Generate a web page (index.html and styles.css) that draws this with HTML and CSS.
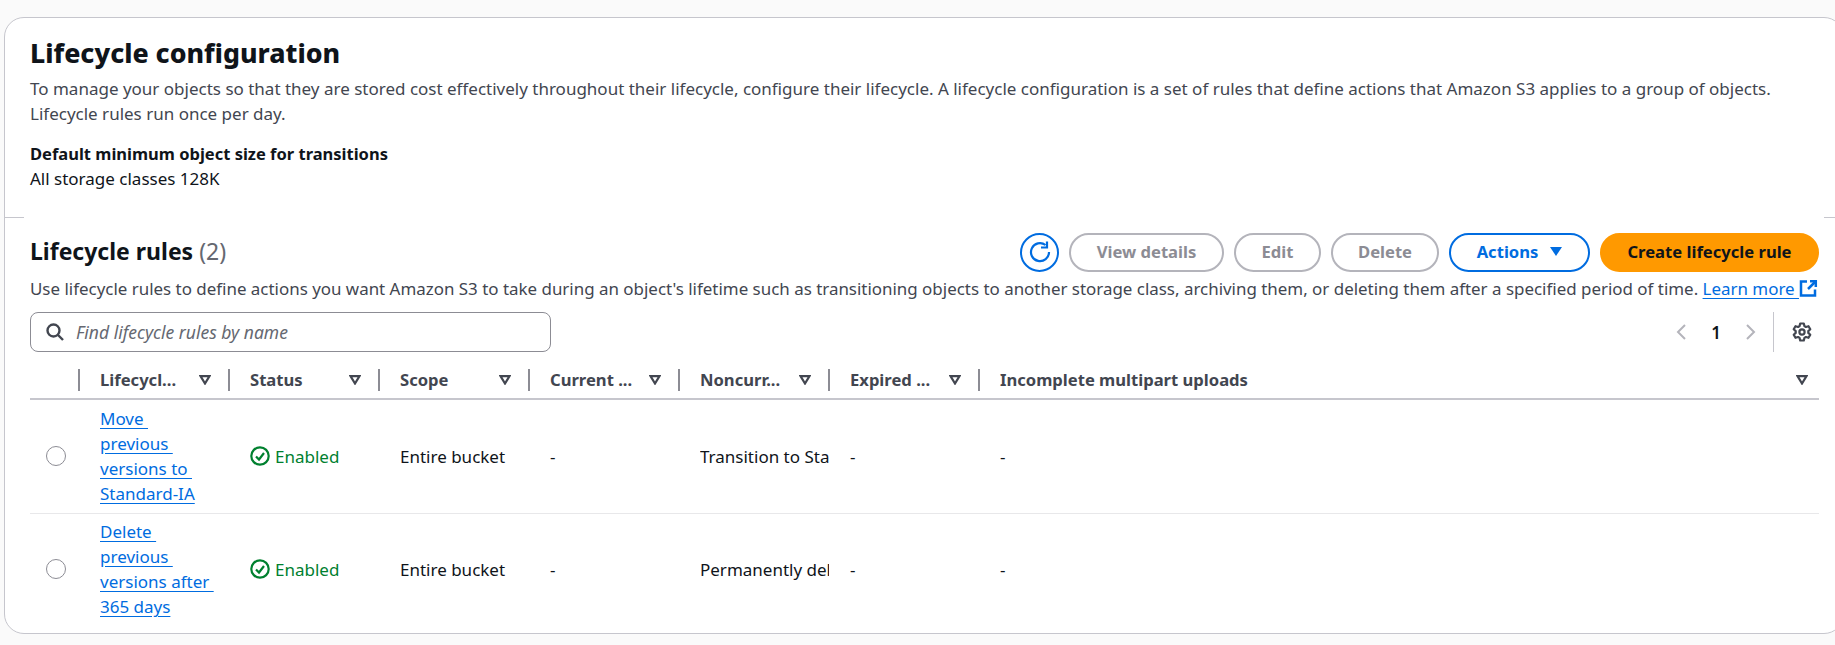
FILE: index.html
```html
<!DOCTYPE html>
<html lang="en">
<head>
<meta charset="UTF-8">
<title>Lifecycle configuration</title>
<link rel="stylesheet" href="styles.css">
</head>
<body>

<div class="card">
    <div class="config">
        <h1>Lifecycle configuration</h1>
        <p class="desc">To manage your objects so that they are stored cost effectively throughout their lifecycle, configure their lifecycle. A lifecycle configuration is a set of rules that define actions that Amazon S3 applies to a group of objects. Lifecycle rules run once per day.</p>
        <div class="min-size">
            <div class="label">Default minimum object size for transitions</div>
            <div>All storage classes 128K</div>
        </div>
    </div>

    <div class="divider"><span></span><span></span></div>

    <div class="rules">
        <div class="rules-head">
            <h2>Lifecycle rules <span class="count">(2)</span></h2>
            <div class="actions">
                <button class="btn round" aria-label="Refresh">
                    <svg width="24" height="24" viewBox="0 0 24 24" fill="none" stroke="#006ce0" stroke-width="2.2"><path d="M21 12a9 9 0 1 1-3.500-7"/><path d="M19 1.500v6h-6"/></svg>
                </button>
                <button class="btn off view"><span>View details</span></button>
                <button class="btn off edit"><span>Edit</span></button>
                <button class="btn off del"><span>Delete</span></button>
                <button class="btn blue act"><span>Actions</span> <span class="caret"></span></button>
                <button class="btn primary"><span>Create lifecycle rule</span></button>
            </div>
        </div>
        <p class="rules-desc">Use lifecycle rules to define actions you want Amazon S3 to take during an object's lifetime such as transitioning objects to another storage class, archiving them, or deleting them after a specified period of time. <a href="#">Learn more&nbsp;</a><svg class="ext" width="19" height="19" viewBox="0 0 19 19" fill="none" stroke="#006ce0" stroke-width="2.5"><path d="M8 2.500H2v14h14v-6"/><path d="M11 2.200h5.800V8"/><path d="M16.500 2.500L9 10"/></svg></p>

        <div class="tools">
            <div class="search">
                <svg width="18" height="18" viewBox="0 0 18 18" fill="none" stroke="#424650" stroke-width="2.4"><circle cx="7.500" cy="7.500" r="6"/><path d="M12 12l5 5"/></svg>
                <span>Find lifecycle rules by name</span>
            </div>
            <div class="pager">
                <svg width="12" height="18" viewBox="0 0 12 18" fill="none" stroke="#b4b4bb" stroke-width="2"><path d="M10 2L3 9l7 7"/></svg>
                <span class="page">1</span>
                <svg width="12" height="18" viewBox="0 0 12 18" fill="none" stroke="#b4b4bb" stroke-width="2"><path d="M2 2l7 7-7 7"/></svg>
                <span class="pager-line"></span>
                <svg class="gear" width="20" height="20" viewBox="0 0 20 20" fill="none" stroke="#424650" stroke-width="2.200" stroke-linejoin="round"><circle cx="10" cy="10" r="2.600"/><path d="M8.200 1.500h3.600l.6 2.600 1.500.9 2.600-.8 1.800 3.100-2 1.800v1.800l2 1.800-1.800 3.100-2.600-.8-1.500.9-.6 2.600H8.200l-.6-2.600-1.500-.9-2.600.8-1.800-3.100 2-1.800V9.100l-2-1.800 1.800-3.100 2.600.8 1.500-.9z"/></svg>
            </div>
        </div>

        <table>
            <thead>
                <tr>
                    <th class="col-radio"></th>
                    <th class="col"><div class="th">Lifecycl...<svg class="sort" width="12" height="10" viewBox="0 0 12 10"><path d="M1.500 1.200h9L6 8.500z"/></svg></div></th>
                    <th class="col"><div class="th">Status<svg class="sort" width="12" height="10" viewBox="0 0 12 10"><path d="M1.500 1.200h9L6 8.500z"/></svg></div></th>
                    <th class="col"><div class="th">Scope<svg class="sort" width="12" height="10" viewBox="0 0 12 10"><path d="M1.500 1.200h9L6 8.500z"/></svg></div></th>
                    <th class="col"><div class="th">Current ...<svg class="sort" width="12" height="10" viewBox="0 0 12 10"><path d="M1.500 1.200h9L6 8.500z"/></svg></div></th>
                    <th class="col"><div class="th">Noncurr...<svg class="sort" width="12" height="10" viewBox="0 0 12 10"><path d="M1.500 1.200h9L6 8.500z"/></svg></div></th>
                    <th class="col"><div class="th">Expired ...<svg class="sort" width="12" height="10" viewBox="0 0 12 10"><path d="M1.500 1.200h9L6 8.500z"/></svg></div></th>
                    <th><div class="th last">Incomplete multipart uploads<svg class="sort" width="12" height="10" viewBox="0 0 12 10"><path d="M1.500 1.200h9L6 8.500z"/></svg></div></th>
                </tr>
            </thead>
            <tbody>
                <tr>
                    <td class="cell-radio"><span class="radio"></span></td>
                    <td class="cell-link"><a href="#">Move&nbsp;<br>previous&nbsp;<br>versions to&nbsp;<br>Standard-IA</a></td>
                    <td><span class="status"><svg width="20" height="20" viewBox="0 0 20 20" fill="none" stroke="#00802f" stroke-width="2.200"><circle cx="10" cy="10" r="8.700"/><path d="M6 10.500l3 3 5-6.500"/></svg>Enabled</span></td>
                    <td>Entire bucket</td>
                    <td>-</td>
                    <td><div class="clip">Transition to Standard-IA</div></td>
                    <td>-</td>
                    <td>-</td>
                </tr>
                <tr>
                    <td class="cell-radio"><span class="radio"></span></td>
                    <td class="cell-link"><a href="#">Delete&nbsp;<br>previous&nbsp;<br>versions after&nbsp;<br>365 days</a></td>
                    <td><span class="status"><svg width="20" height="20" viewBox="0 0 20 20" fill="none" stroke="#00802f" stroke-width="2.200"><circle cx="10" cy="10" r="8.700"/><path d="M6 10.500l3 3 5-6.500"/></svg>Enabled</span></td>
                    <td>Entire bucket</td>
                    <td>-</td>
                    <td><div class="clip">Permanently delete</div></td>
                    <td>-</td>
                    <td>-</td>
                </tr>
            </tbody>
        </table>
    </div>
</div>

</body>
</html>
```

FILE: styles.css
```css
* {
    box-sizing: border-box;
}

body {
    margin: 0;
    height: 645px;
    overflow: hidden;
    padding: 17px 0 0 4px;
    background-color: #fafafa;
    color: #0f141a;
    font-family: "Noto Sans", sans-serif;
    font-size: 17px;
    line-height: 25px;
}

.card {
    width: 1840px;
    height: 617px;
    border: 1px solid #c6c6cd;
    border-radius: 20px;
    background-color: #fff;
}

.config {
    padding: 17px 25px 0;
    height: 199px;
}

h1 {
    margin: 0;
    font-size: 26.7px;
    line-height: 35px;
    font-weight: 800;
}

.desc {
    margin: 6px 0 0;
    width: 1770px;
    color: #424650;
}

.min-size {
    margin-top: 15px;
}

.label {
    font-size: 16.5px;
    font-weight: 700;
}

.divider {
    display: flex;
    justify-content: space-between;
}

.divider span {
    width: 19px;
    border-top: 1px solid #c6c6cd;
}

.rules {
    padding: 14px 0 0 25px;
    width: 1814px;
}

.rules-head {
    display: flex;
    justify-content: space-between;
    align-items: center;
    height: 40px;
}

h2 {
    margin: 0 0 2px;
    font-size: 23px;
    line-height: 28px;
    font-weight: 700;
}

.count {
    font-weight: 400;
    color: #656871;
}

.actions {
    display: flex;
    gap: 10px;
}

.btn {
    display: flex;
    align-items: center;
    justify-content: center;
    height: 39px;
    padding: 0 0 2px;
    border: 2px solid #b4b4bb;
    border-radius: 20px;
    background-color: #fff;
    font-family: inherit;
    font-size: 16.6px;
    font-weight: 700;
}

.round {
    width: 39px;
    padding: 0;
    border-color: #006ce0;
}

.off {
    color: #8c8c94;
}

.view {
    width: 155px;
}

.edit {
    width: 87px;
}

.del {
    width: 108px;
}

.blue {
    border-color: #006ce0;
    color: #006ce0;
}

.act {
    width: 141px;
    gap: 12px;
}

.caret {
    width: 0;
    height: 0;
    border-left: 6px solid transparent;
    border-right: 6px solid transparent;
    border-top: 9px solid #006ce0;
}

.primary {
    width: 219px;
    border-color: #ff9900;
    background-color: #ff9900;
    color: #0f141a;
}

.rules-desc {
    margin: 0;
    padding-top: 4px;
    color: #424650;
    font-size: 16.93px;
    white-space: nowrap;
}

.rules-desc a {
    color: #006ce0;
    text-underline-offset: 3px;
}

.ext {
    vertical-align: -3px;
}

.tools {
    display: flex;
    justify-content: space-between;
    margin-top: 11px;
}

.search {
    display: flex;
    align-items: center;
    gap: 12px;
    width: 521px;
    height: 40px;
    padding-left: 15px;
    border: 1px solid #8c8c94;
    border-radius: 8px;
    color: #656871;
    font-size: 17.5px;
    font-style: italic;
}

.pager {
    display: flex;
    align-items: center;
    height: 40px;
    padding-right: 7px;
}

.page {
    width: 58px;
    text-align: center;
    font-weight: 600;
}

.pager-line {
    width: 1px;
    height: 40px;
    margin: 0 18px 0 16px;
    background-color: #c6c6cd;
}

table {
    width: 100%;
    margin-top: 5px;
    border-collapse: collapse;
    table-layout: fixed;
}

th {
    height: 42px;
    padding: 4px 0 0;
    border-bottom: 2px solid #c6c6cd;
    text-align: left;
}

.col-radio {
    width: 48px;
}

.col {
    width: 150px;
}

.th {
    display: flex;
    justify-content: space-between;
    align-items: center;
    height: 22px;
    padding: 0 17px 0 20px;
    border-left: 2px solid #8c8c94;
    color: #424650;
    font-size: 16.6px;
    white-space: nowrap;
}

.th.last {
    padding-right: 11px;
}

.sort {
    fill: none;
    stroke: #424650;
    stroke-width: 2.2;
}

td {
    height: 114px;
    padding: 0 20px 0 22px;
    border-bottom: 1px solid #e8e8ea;
}

tbody tr:last-child td {
    border-bottom: none;
    height: 112px;
}

.cell-radio {
    padding: 0 0 0 16px;
}

.cell-link {
    padding-right: 0;
    white-space: nowrap;
}

.radio {
    display: block;
    width: 20px;
    height: 20px;
    border: 1.5px solid #8c8c94;
    border-radius: 50%;
}

td a {
    color: #006ce0;
    text-underline-offset: 3px;
}

.status {
    display: flex;
    align-items: center;
    gap: 5px;
    color: #00802f;
}

.clip {
    overflow: hidden;
    white-space: nowrap;
    margin-right: -21px;
}
```
